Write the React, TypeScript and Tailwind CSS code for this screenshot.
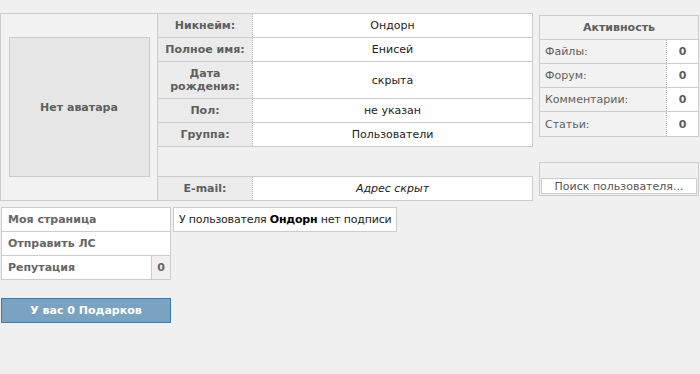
import React from 'react';

const profileRows = [
  { label: 'Никнейм:', value: 'Ондорн', h: 'h-[24px]' },
  { label: 'Полное имя:', value: 'Енисей', h: 'h-[24px]' },
  { label: 'Дата рождения:', value: 'скрыта', h: 'h-[37px]' },
  { label: 'Пол:', value: 'не указан', h: 'h-[24px]' },
  { label: 'Группа:', value: 'Пользователи', h: 'h-[24px]' },
];

const activity = [
  { label: 'Файлы:', value: 0 },
  { label: 'Форум:', value: 0 },
  { label: 'Комментарии:', value: 0 },
  { label: 'Статьи:', value: 0 },
];

export default function App() {
  return (
    <div className="min-h-screen bg-[#f0f0f0] font-['DejaVu_Sans',sans-serif] text-[11px] leading-[13px] text-[#222]">
      <div className="flex items-start gap-[6px] pt-[13px]">
        {/* Profile block */}
        <div className="flex w-[533px] border-y border-l border-[#ccc] bg-[#f2f2f2]">
          <div className="flex w-[157px] shrink-0 items-center justify-center border-r border-[#ccc]">
            <div className="flex h-[140px] w-[141px] items-center justify-center border border-[#ccc] bg-[#e6e6e6] font-bold text-[#5e5e5e]">
              Нет аватара
            </div>
          </div>
          <div className="flex flex-1 flex-col">
            {profileRows.map(row => (
              <div key={row.label} className={`flex ${row.h} border-b border-r border-[#ccc]`}>
                <div className="flex w-[95px] shrink-0 items-center justify-center border-r border-dotted border-[#bbb] bg-[#ebebeb] px-1 text-center font-bold text-[#5e5e5e]">
                  {row.label}
                </div>
                <div className="flex flex-1 items-center justify-center bg-white">{row.value}</div>
              </div>
            ))}
            <div className="h-[30px] border-b border-[#ccc] bg-[#f0f0f0]" />
            <div className="flex h-[23px] border-r border-[#ccc]">
              <div className="flex w-[95px] shrink-0 items-center justify-center border-r border-dotted border-[#bbb] bg-[#ebebeb] font-bold text-[#5e5e5e]">
                E-mail:
              </div>
              <div className="flex flex-1 items-center justify-center bg-white italic">Адрес скрыт</div>
            </div>
          </div>
        </div>

        {/* Right column */}
        <div className="flex w-[160px] flex-col pt-[2px]">
          <div className="border border-[#ccc] bg-[#f2f2f2]">
            <div className="flex h-[24px] items-center justify-center border-b border-[#ccc] font-bold text-[#5e5e5e]">
              Активность
            </div>
            {activity.map((a, i) => (
              <div
                key={a.label}
                className={`flex h-[24px] ${i < activity.length - 1 ? 'border-b border-[#ccc]' : 'h-[23px]'}`}
              >
                <div className="flex flex-1 items-center pl-[5px] text-[#5e5e5e]">{a.label}</div>
                <div className="flex w-[32px] items-center justify-center border-l border-dotted border-[#bbb] bg-white font-bold text-[#5e5e5e]">
                  {a.value}
                </div>
              </div>
            ))}
          </div>
          <div className="mt-[25px] h-[34px] border border-[#ccc] bg-[#f0f0f0] px-[1px] pt-[15px]">
            <div className="flex h-[16px] items-center justify-center border border-[#ccc] bg-white text-[#555]">
              Поиск пользователя...
            </div>
          </div>
        </div>
      </div>

      {/* Bottom section */}
      <div className="mt-[6px] flex items-start gap-[2px] pl-[1px]">
        <div className="flex w-[170px] flex-col">
          <div className="border border-[#ccc] bg-white font-bold text-[#666]">
            <div className="flex h-[24px] items-center border-b border-[#ccc] pl-[6px]">Моя страница</div>
            <div className="flex h-[24px] items-center border-b border-[#ccc] pl-[6px]">Отправить ЛС</div>
            <div className="flex h-[23px]">
              <div className="flex flex-1 items-center pl-[6px]">Репутация</div>
              <div className="flex w-[19px] items-center justify-center border-l border-[#ccc] bg-[#f0f0f0]">0</div>
            </div>
          </div>
          <button className="mt-[18px] flex h-[25px] w-[170px] items-center justify-center border border-[#2f7cc0] bg-[#7aa3c2] font-bold text-white">
            У вас 0 Подарков
          </button>
        </div>
        <div className="flex h-[25px] items-center whitespace-nowrap border border-[#ccc] bg-white px-[5px] tracking-[-0.2px]">
          У пользователя&nbsp;<b className="text-black">Ондорн</b>&nbsp;нет подписи
        </div>
      </div>
    </div>
  );
}
